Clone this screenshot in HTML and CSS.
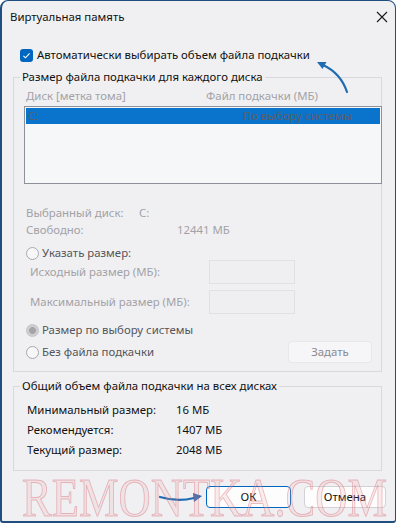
FILE: index.html
```html
<!DOCTYPE html>
<html lang="ru">
<head>
<meta charset="utf-8">
<title>Виртуальная память</title>
<link rel="stylesheet" href="styles.css">
</head>
<body>
<div class="window">
  <div class="titlebar">
    <span class="title">Виртуальная память</span>
    <svg class="close" width="12" height="12" viewBox="0 0 12 12"><path d="M1 1L11 11M11 1L1 11" stroke="#1a1a1a" stroke-width="1.1" fill="none"/></svg>
  </div>

  <div class="auto-row">
    <span class="checkbox"><svg width="13" height="13" viewBox="0 0 13 13"><rect x="0" y="0" width="13" height="13" rx="3" fill="#0067c0"/><path d="M3.4 6.8L5.5 8.8L9.6 4.4" stroke="#fff" stroke-width="1.1" fill="none"/></svg></span>
    <span class="auto-label">Автоматически выбирать объем файла подкачки</span>
  </div>

  <div class="group group-disk">
    <div class="group-title">Размер файла подкачки для каждого диска</div>
    <div class="col-head">
      <span class="col-disk">Диск [метка тома]</span>
      <span class="col-file">Файл подкачки (МБ)</span>
    </div>
    <div class="listbox">
      <div class="list-row">
        <span class="row-disk">C:</span>
        <span class="row-file">По выбору системы</span>
      </div>
    </div>
    <div class="info-row info-first"><span class="info-label-a">Выбранный диск:</span><span>C:</span></div>
    <div class="info-row"><span class="info-label-b">Свободно:</span><span>12441 МБ</span></div>

    <div class="radio-row radio-first">
      <span class="radio"></span><span class="radio-label">Указать размер:</span>
    </div>
    <div class="field-row">
      <span class="field-label">Исходный размер (МБ):</span><span class="field-box"></span>
    </div>
    <div class="field-row field-row-2">
      <span class="field-label">Максимальный размер (МБ):</span><span class="field-box"></span>
    </div>
    <div class="radio-row radio-system">
      <span class="radio radio-on"></span><span class="radio-label">Размер по выбору системы</span>
    </div>
    <div class="radio-row radio-none">
      <span class="radio"></span><span class="radio-label">Без файла подкачки</span>
      <span class="set-btn">Задать</span>
    </div>
  </div>

  <div class="group group-total">
    <div class="group-title">Общий объем файла подкачки на всех дисках</div>
    <div class="total-row total-first"><span class="total-label">Минимальный размер:</span><span>16 МБ</span></div>
    <div class="total-row"><span class="total-label">Рекомендуется:</span><span>1407 МБ</span></div>
    <div class="total-row"><span class="total-label">Текущий размер:</span><span>2048 МБ</span></div>
  </div>

  <div class="buttons">
    <span class="btn btn-ok">ОК</span>
    <span class="btn btn-cancel">Отмена</span>
  </div>

  <svg class="arrow arrow-top" width="44" height="44" viewBox="0 0 44 44"><path d="M35 39C31 27 24 18 11 12" stroke="#1f6cb3" stroke-width="2.2" fill="none" stroke-linecap="round"/><path d="M5 9L14.5 9L10.5 16Z" fill="#1f6cb3"/></svg>
  <svg class="arrow arrow-ok" width="48" height="14" viewBox="0 0 48 14"><path d="M2 6C12 9 24 10 36 7" stroke="#1f6cb3" stroke-width="2.2" fill="none" stroke-linecap="round"/><path d="M44 5L35 2L36 11Z" fill="#1f6cb3"/></svg>
  <div class="watermark">REMONTKA.COM</div>
</div>
</body>
</html>
```
FILE: styles.css
```css
html, body {
  margin: 0;
  padding: 0;
  background: #ffffff;
}

body {
  font-family: "Noto Sans", "Open Sans", sans-serif;
  font-size: 11.4px;
  color: #111111;
}

.window {
  position: relative;
  box-sizing: border-box;
  width: 396px;
  height: 523px;
  border: 1px solid #1e4f80;
  border-left-width: 2px;
  border-bottom-width: 2px;
  border-radius: 8px 8px 3px 3px;
  background: #f0f0f3;
  overflow: hidden;
}

.titlebar {
  height: 32px;
  display: flex;
  align-items: center;
  justify-content: space-between;
  padding: 0 7px 0 8px;
}

.title {
  line-height: 16px;
}

.close {
  display: block;
}

.auto-row {
  display: flex;
  align-items: center;
  height: 20px;
  margin-top: 12px;
  padding-left: 18px;
}

.checkbox {
  display: block;
  width: 13px;
  height: 13px;
}
.checkbox svg { display: block; }

.auto-label {
  margin-left: 4px;
  line-height: 16px;
}

.group {
  margin: 12px 13px 0 11px;
  border: 1px solid #d9d9dd;
}

.group-title {
  width: fit-content;
  margin: -9px 0 0 6px;
  padding: 0 2px;
  line-height: 16px;
  background: #f0f0f3;
}

.group-disk {
  padding: 0 0 8px 0;
}

.col-head {
  display: flex;
  height: 16px;
  line-height: 16px;
  margin-top: 3px;
  padding-left: 12px;
  color: #a2a2a6;
}

.col-disk {
  width: 180px;
}

.listbox {
  box-sizing: border-box;
  height: 78px;
  margin: 2px -1px 0 10px;
  padding: 1px;
  border: 1px solid #8b9099;
  background: #f5f7f9;
}

.list-row {
  display: flex;
  height: 16px;
  line-height: 16px;
  background: #0a74cc;
  color: #5b5f66;
}

.row-disk {
  margin-left: 2px;
}

.row-file {
  margin-left: auto;
  margin-right: 28px;
}

.info-row {
  display: flex;
  height: 17px;
  line-height: 17px;
  padding-left: 12px;
  color: #a2a2a6;
}

.info-first {
  margin-top: 20px;
}

.info-label-a {
  width: 113px;
}

.info-label-b {
  width: 151px;
}

.radio-row {
  display: flex;
  align-items: center;
  padding-left: 12px;
  color: #55555a;
}

.radio-first {
  height: 14px;
  margin-top: 8px;
}

.radio {
  box-sizing: border-box;
  width: 13px;
  height: 13px;
  border: 1px solid #a9a9ad;
  border-radius: 50%;
  background: #f7f7f9;
  flex: none;
}

.radio-on {
  border-color: #c4c4c8;
  background: radial-gradient(circle, #a5a5a9 0 3.2px, #cfcfd3 3.7px);
}

.radio-label {
  margin-left: 3px;
  line-height: 16px;
}

.field-row {
  display: flex;
  align-items: center;
  height: 24px;
  padding-left: 16px;
  color: #a2a2a6;
}

.field-row-2 {
  margin-top: 6px;
}

.field-label {
  width: 179px;
  line-height: 16px;
}

.field-box {
  box-sizing: border-box;
  width: 86px;
  height: 24px;
  border: 1px solid #e1e1e5;
  background: #efeff2;
}

.radio-system {
  height: 16px;
  margin-top: 8px;
}

.radio-none {
  height: 22px;
  margin-top: 3px;
  padding-right: 9px;
}

.set-btn {
  box-sizing: border-box;
  margin-left: auto;
  width: 84px;
  height: 22px;
  line-height: 20px;
  text-align: center;
  border: 1px solid #e8e8ec;
  border-radius: 4px;
  background: #f6f6f8;
  color: #8a8a90;
}

.group-total {
  margin-top: 14px;
  padding: 0 0 10px 0;
}

.total-row {
  display: flex;
  height: 20px;
  line-height: 20px;
  padding-left: 13px;
}

.total-first {
  margin-top: 6px;
}

.total-label {
  width: 149px;
}

.buttons {
  display: flex;
  justify-content: flex-end;
  gap: 13px;
  margin-top: 15px;
  padding-right: 9px;
}

.btn {
  box-sizing: border-box;
  height: 22px;
  line-height: 20px;
  text-align: center;
  border-radius: 4px;
  background: #fdfdfd;
}

.btn-ok {
  width: 85px;
  border: 1px solid #0067c0;
}

.btn-cancel {
  width: 82px;
  border: 1px solid #d2d2d6;
}

.arrow {
  position: absolute;
  display: block;
}

.arrow-top {
  left: 310px;
  top: 52px;
}

.arrow-ok {
  left: 156px;
  top: 490px;
}

.watermark {
  position: absolute;
  left: 20px;
  top: 467px;
  font-family: "Liberation Serif", serif;
  font-size: 55px;
  line-height: 60px;
  transform: scaleX(0.81);
  transform-origin: left top;
  color: rgba(235, 170, 175, 0.2);
  -webkit-text-stroke: 1px rgba(215, 90, 100, 0.38);
  pointer-events: none;
  white-space: nowrap;
}
```
